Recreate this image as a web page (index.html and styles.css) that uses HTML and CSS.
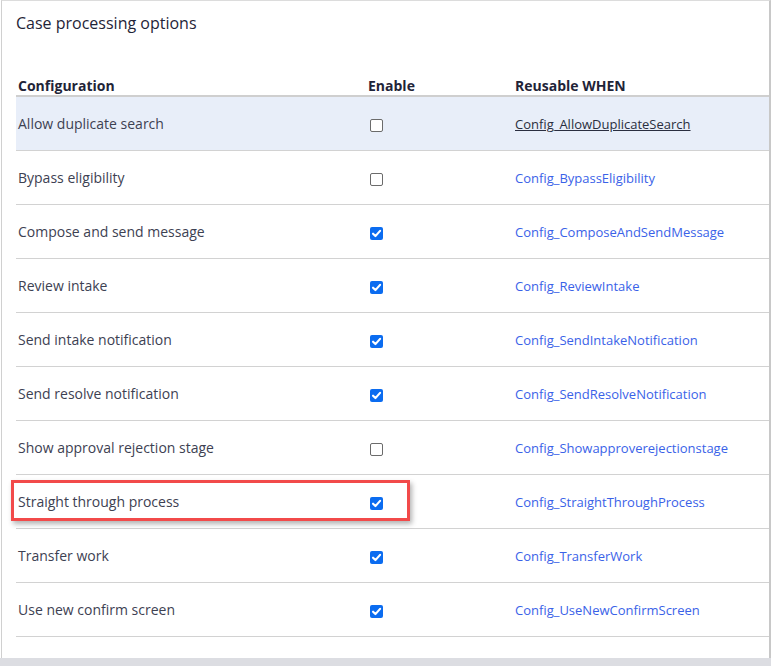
FILE: index.html
```html
<!DOCTYPE html>
<html>
<head>
<meta charset="utf-8">
<link rel="stylesheet" href="styles.css">
</head>
<body>
<div class="panel">
  <h1 class="title">Case processing options</h1>
  <div class="table">
    <div class="row head">
      <div class="cell">Configuration</div>
      <div class="cell">Enable</div>
      <div class="cell">Reusable WHEN</div>
    </div>
    <div class="row hover">
      <div class="cell">Allow duplicate search</div>
      <div class="cell"><span class="cb"></span></div>
      <div class="cell"><a class="link">Config_AllowDuplicateSearch</a></div>
    </div>
    <div class="row">
      <div class="cell">Bypass eligibility</div>
      <div class="cell"><span class="cb"></span></div>
      <div class="cell"><a class="link">Config_BypassEligibility</a></div>
    </div>
    <div class="row">
      <div class="cell">Compose and send message</div>
      <div class="cell"><span class="cb on"><svg viewBox="0 0 12 12"><path d="M2.8 6.2 L5 8.4 L9.3 3.6" /></svg></span></div>
      <div class="cell"><a class="link">Config_ComposeAndSendMessage</a></div>
    </div>
    <div class="row">
      <div class="cell">Review intake</div>
      <div class="cell"><span class="cb on"><svg viewBox="0 0 12 12"><path d="M2.8 6.2 L5 8.4 L9.3 3.6" /></svg></span></div>
      <div class="cell"><a class="link">Config_ReviewIntake</a></div>
    </div>
    <div class="row">
      <div class="cell">Send intake notification</div>
      <div class="cell"><span class="cb on"><svg viewBox="0 0 12 12"><path d="M2.8 6.2 L5 8.4 L9.3 3.6" /></svg></span></div>
      <div class="cell"><a class="link">Config_SendIntakeNotification</a></div>
    </div>
    <div class="row">
      <div class="cell">Send resolve notification</div>
      <div class="cell"><span class="cb on"><svg viewBox="0 0 12 12"><path d="M2.8 6.2 L5 8.4 L9.3 3.6" /></svg></span></div>
      <div class="cell"><a class="link">Config_SendResolveNotification</a></div>
    </div>
    <div class="row">
      <div class="cell">Show approval rejection stage</div>
      <div class="cell"><span class="cb"></span></div>
      <div class="cell"><a class="link">Config_Showapproverejectionstage</a></div>
    </div>
    <div class="row marked">
      <div class="cell">Straight through process</div>
      <div class="cell"><span class="cb on"><svg viewBox="0 0 12 12"><path d="M2.8 6.2 L5 8.4 L9.3 3.6" /></svg></span></div>
      <div class="cell"><a class="link">Config_StraightThroughProcess</a></div>
      <div class="highlight"></div>
    </div>
    <div class="row">
      <div class="cell">Transfer work</div>
      <div class="cell"><span class="cb on"><svg viewBox="0 0 12 12"><path d="M2.8 6.2 L5 8.4 L9.3 3.6" /></svg></span></div>
      <div class="cell"><a class="link">Config_TransferWork</a></div>
    </div>
    <div class="row">
      <div class="cell">Use new confirm screen</div>
      <div class="cell"><span class="cb on"><svg viewBox="0 0 12 12"><path d="M2.8 6.2 L5 8.4 L9.3 3.6" /></svg></span></div>
      <div class="cell"><a class="link">Config_UseNewConfirmScreen</a></div>
    </div>
  </div>
</div>
<div class="footer-band"></div>
</body>
</html>
```

FILE: styles.css
```css
html, body {
  margin: 0;
  padding: 0;
  background: #ffffff;
}
body {
  font-family: "Open Sans", "Liberation Sans", sans-serif;
  color: #3d4152;
  width: 771px;
  height: 666px;
  overflow: hidden;
}
.panel {
  height: 658px;
  box-sizing: border-box;
  border-top: 1px solid #dcdcdc;
  border-left: 1px solid #d0d0d0;
  border-right: 2px solid #c8c8c8;
  margin-left: 1px;
  padding-left: 14px;
}
.title {
  margin: 0;
  font-size: 16px;
  font-weight: 400;
  color: #1f2438;
  line-height: 22px;
  padding-top: 11px;
  height: 60px;
  box-sizing: border-box;
}
.table {
  display: flex;
  flex-direction: column;
}
.row {
  display: grid;
  grid-template-columns: 350px 147px 1fr;
  height: 54px;
  border-bottom: 1px solid #d2d2d2;
  box-sizing: border-box;
  align-items: center;
  font-size: 14px;
  position: relative;
}
.row.head {
  height: 36px;
  border-bottom: 2px solid #cfcfcf;
  font-weight: 700;
  color: #1f2438;
  align-items: end;
  padding-bottom: 0;
}
.row.head .cell {
  line-height: 18px;
}
.row.hover {
  background: #e8eef9;
}
.cell {
  padding-left: 2px;
  line-height: 20px;
}
.link {
  color: #3a62e8;
  font-size: 13px;
  text-decoration: none;
}
.row.hover .link {
  color: #2a2e40;
  text-decoration: underline;
}
.cb {
  display: inline-block;
  width: 11px;
  height: 11px;
  border: 1px solid #6b6b6b;
  border-radius: 2px;
  vertical-align: middle;
  position: relative;
  top: 1px;
  left: 2px;
  background: #ffffff;
}
.cb.on {
  width: 13px;
  height: 13px;
  border: none;
  background: #0b6cf0;
}
.cb svg {
  display: block;
  width: 13px;
  height: 13px;
}
.cb svg path {
  fill: none;
  stroke: #ffffff;
  stroke-width: 2;
  stroke-linecap: round;
  stroke-linejoin: round;
}
.highlight {
  position: absolute;
  left: -5px;
  top: 5px;
  width: 399px;
  height: 41px;
  box-sizing: border-box;
  border: 3px solid #f24a4a;
  box-shadow: 2px 3px 5px rgba(0, 0, 0, 0.3);
  pointer-events: none;
}
.footer-band {
  height: 8px;
  background: #dcdde2;
}
```
